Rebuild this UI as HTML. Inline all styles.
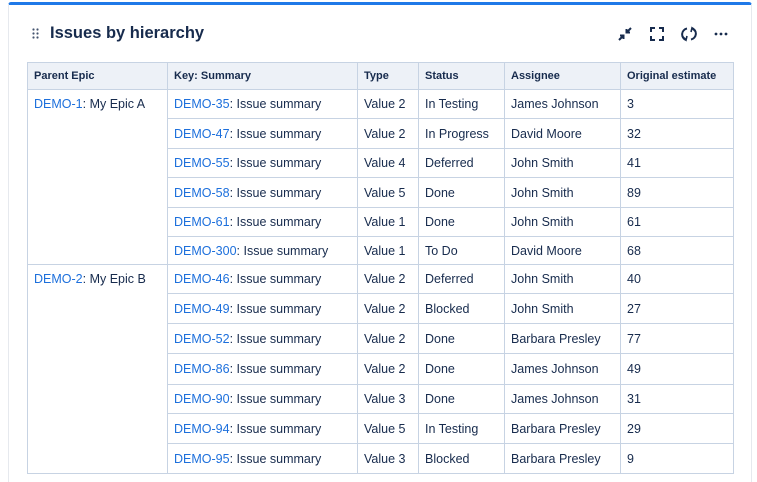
<!DOCTYPE html>
<html><head><style>
body{margin:0;width:757px;height:467px;overflow:hidden;background:#fff;font-family:"Liberation Sans",sans-serif;}
.card{position:absolute;left:8px;top:2px;width:744px;height:480px;border-top:3px solid #1f79e8;border-left:1px solid #e6e9ee;border-right:1px solid #e6e9ee;box-sizing:border-box;border-radius:3px 3px 0 0;}
.title{position:absolute;left:50px;top:24px;font-size:16.5px;font-weight:bold;color:#172b4d;}
.grip{position:absolute;left:32px;top:28px;}
table{position:absolute;left:27px;top:62px;border-collapse:collapse;font-size:12.5px;color:#172b4d;table-layout:fixed;}
td,th{border:1px solid #c7d3e3;padding:0 6px;text-align:left;white-space:nowrap;}
th{background:#edf1f7;font-size:11px;font-weight:bold;height:26px;}
td{vertical-align:middle;}
td.ep{vertical-align:top;padding-top:7px;}
a{color:#1c6fdc;text-decoration:none;}
.ic{position:absolute;top:26px;}
</style></head><body>
<div class="card"></div>
<svg class="grip" width="8" height="12" viewBox="0 0 8 12" fill="#44546f"><circle cx="1.5" cy="1.5" r="1.1"/><circle cx="5.5" cy="1.5" r="1.1"/><circle cx="1.5" cy="5.5" r="1.1"/><circle cx="5.5" cy="5.5" r="1.1"/><circle cx="1.5" cy="9.5" r="1.1"/><circle cx="5.5" cy="9.5" r="1.1"/></svg>
<div class="title">Issues by hierarchy</div>
<svg class="ic" style="left:617px" width="16" height="16" viewBox="0 0 16 16" fill="none" stroke="#172b4d" stroke-width="2"><path d="M2 14L6 10M3 9.5H6.5V13"/><path d="M14 2L10 6M9.5 3V6.5H13"/></svg>
<svg class="ic" style="left:649px" width="16" height="16" viewBox="0 0 16 16" fill="none" stroke="#172b4d" stroke-width="2"><path d="M2 6V2H6M10 2H14V6M14 10V14H10M6 14H2V10"/></svg>
<svg class="ic" style="left:681px" width="16" height="16" viewBox="0 0 16 16" fill="none" stroke="#172b4d" stroke-width="2"><path d="M6 2.5A6 6 0 0 0 5 14M10 13.5A6 6 0 0 0 11 2"/><path d="M2 11L5 14L6 10M14 5L11 2L10 6" stroke-width="1.6"/></svg>
<svg class="ic" style="left:713px" width="16" height="16" viewBox="0 0 16 16" fill="#172b4d"><circle cx="3" cy="8" r="1.4"/><circle cx="8" cy="8" r="1.4"/><circle cx="13" cy="8" r="1.4"/></svg>
<table>
<colgroup><col style="width:140px"><col style="width:190px"><col style="width:61px"><col style="width:86px"><col style="width:116px"><col style="width:113px"></colgroup>
<tr><th>Parent Epic</th><th>Key: Summary</th><th>Type</th><th>Status</th><th>Assignee</th><th>Original estimate</th></tr>
<tr style="height:29px"><td class="ep" rowspan="6"><a>DEMO-1</a>: My Epic A</td><td><a>DEMO-35</a>: Issue summary</td><td>Value 2</td><td>In Testing</td><td>James Johnson</td><td>3</td></tr>
<tr style="height:30px"><td><a>DEMO-47</a>: Issue summary</td><td>Value 2</td><td>In Progress</td><td>David Moore</td><td>32</td></tr>
<tr style="height:29px"><td><a>DEMO-55</a>: Issue summary</td><td>Value 4</td><td>Deferred</td><td>John Smith</td><td>41</td></tr>
<tr style="height:30px"><td><a>DEMO-58</a>: Issue summary</td><td>Value 5</td><td>Done</td><td>John Smith</td><td>89</td></tr>
<tr style="height:29px"><td><a>DEMO-61</a>: Issue summary</td><td>Value 1</td><td>Done</td><td>John Smith</td><td>61</td></tr>
<tr style="height:28px"><td><a>DEMO-300</a>: Issue summary</td><td>Value 1</td><td>To Do</td><td>David Moore</td><td>68</td></tr>
<tr style="height:29px"><td class="ep" rowspan="7"><a>DEMO-2</a>: My Epic B</td><td><a>DEMO-46</a>: Issue summary</td><td>Value 2</td><td>Deferred</td><td>John Smith</td><td>40</td></tr>
<tr style="height:30px"><td><a>DEMO-49</a>: Issue summary</td><td>Value 2</td><td>Blocked</td><td>John Smith</td><td>27</td></tr>
<tr style="height:30px"><td><a>DEMO-52</a>: Issue summary</td><td>Value 2</td><td>Done</td><td>Barbara Presley</td><td>77</td></tr>
<tr style="height:31px"><td><a>DEMO-86</a>: Issue summary</td><td>Value 2</td><td>Done</td><td>James Johnson</td><td>49</td></tr>
<tr style="height:29px"><td><a>DEMO-90</a>: Issue summary</td><td>Value 3</td><td>Done</td><td>James Johnson</td><td>31</td></tr>
<tr style="height:30px"><td><a>DEMO-94</a>: Issue summary</td><td>Value 5</td><td>In Testing</td><td>Barbara Presley</td><td>29</td></tr>
<tr style="height:30px"><td><a>DEMO-95</a>: Issue summary</td><td>Value 3</td><td>Blocked</td><td>Barbara Presley</td><td>9</td></tr>
</table>
</body></html>
